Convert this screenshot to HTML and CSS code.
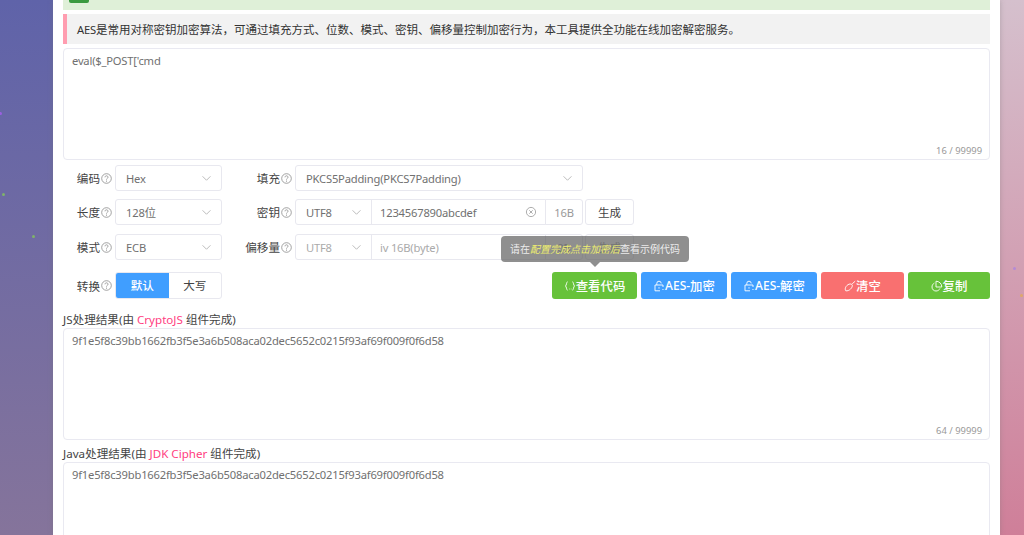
FILE: index.html
```html
<!DOCTYPE html>
<html lang="zh-CN">
<head>
<meta charset="utf-8">
<title>AES</title>
<link rel="stylesheet" href="styles.css">
</head>
<body>
<span class="dot dot-a"></span><span class="dot dot-b"></span><span class="dot dot-c"></span><span class="dot dot-d"></span><span class="dot dot-e"></span>
<main class="sheet">
  <div class="notice"><span class="notice-btn"></span></div>
  <div class="quote"><span class="lat">AES</span>是常用对称密钥加密算法，可通过填充方式、位数、模式、密钥、偏移量控制加密行为，本工具提供全功能在线加密解密服务。</div>
  <div class="area"><div class="area-text lat">eval($_POST['cmd</div><span class="count">16 / 99999</span></div>

  <div class="row r1">
    <div class="lab lab1">编码<svg class="q"><use href="#i-q"/></svg></div>
    <div class="ctl sel w107"><span class="lat">Hex</span><svg class="chev"><use href="#i-c"/></svg></div>
    <div class="lab lab2">填充<svg class="q"><use href="#i-q"/></svg></div>
    <div class="ctl sel w288"><span class="lat">PKCS5Padding(PKCS7Padding)</span><svg class="chev"><use href="#i-c"/></svg></div>
  </div>
  <div class="row r2">
    <div class="lab lab1">长度<svg class="q"><use href="#i-q"/></svg></div>
    <div class="ctl sel w107"><span><span class="lat">128</span>位</span><svg class="chev"><use href="#i-c"/></svg></div>
    <div class="lab lab2">密钥<svg class="q"><use href="#i-q"/></svg></div>
    <div class="group">
      <div class="ctl sel w77"><span class="lat">UTF8</span><svg class="chev"><use href="#i-c"/></svg></div>
      <div class="ctl inp w175"><span class="lat">1234567890abcdef</span><svg class="clear" viewBox="0 0 12 12"><circle cx="6" cy="6" r="4.6"/><path d="M4.300 4.300l3.400 3.400M7.700 4.300l-3.400 3.400"/></svg></div>
      <div class="ctl addon lat">16B</div>
    </div>
    <div class="ctl gen">生成</div>
  </div>
  <div class="row r3">
    <div class="lab lab1">模式<svg class="q"><use href="#i-q"/></svg></div>
    <div class="ctl sel w107"><span class="lat">ECB</span><svg class="chev"><use href="#i-c"/></svg></div>
    <div class="lab lab2">偏移量<svg class="q"><use href="#i-q"/></svg></div>
    <div class="group off">
      <div class="ctl sel w77"><span class="lat">UTF8</span><svg class="chev"><use href="#i-c"/></svg></div>
      <div class="ctl inp w175"><span class="lat">iv 16B(byte)</span></div>
      <div class="ctl addon lat">0B</div>
    </div>
    <div class="ctl gen off">生成</div>
  </div>
  <div class="row r4">
    <div class="lab lab1">转换<svg class="q"><use href="#i-q"/></svg></div>
    <div class="toggle"><span class="on">默认</span><span>大写</span></div>
    <div class="actions">
      <div class="tip">请在<em>配置完成点击加密后</em>查看示例代码</div>
      <button class="btn green w85"><svg viewBox="0 0 12 12"><path d="M3.600 1.800C2.200 1.800 2.800 5.400 1.400 6c1.400.6.8 4.200 2.200 4.200M8.400 1.800c1.400 0 .8 3.600 2.200 4.200-1.400.6-.8 4.200-2.200 4.200M5 9h.6M6.800 9h.6"/></svg>查看代码</button>
      <button class="btn blue w86"><svg viewBox="0 0 12 12"><use href="#i-l"/></svg><span class="lat">AES-</span>加密</button>
      <button class="btn blue w86"><svg viewBox="0 0 12 12"><use href="#i-l"/></svg><span class="lat">AES-</span>解密</button>
      <button class="btn red w83"><svg viewBox="0 0 12 12"><path d="M11.200 1.200L8.200 3.800M1.800 10.800c-1.400-1.800 0-5.400 3.200-6.600 1.400-.5 3-.2 3.300 1C8.700 7.800 5 11.400 1.800 10.800z"/></svg>清空</button>
      <button class="btn green w82"><svg viewBox="0 0 12 12"><path d="M3.400 3C1.900 3.900 1 5.300 1 7c0 2.400 1.800 4 4 4 1.800 0 3.300-1 3.900-2.500M5 1.200V7h5.800C10.800 3.800 8.200 1.200 5 1.200z"/></svg>复制</button>
    </div>
  </div>

  <div class="cap"><span class="lat">JS</span>处理结果(由 <b class="lat">CryptoJS</b> 组件完成)</div>
  <div class="area"><div class="area-text lat">9f1e5f8c39bb1662fb3f5e3a6b508aca02dec5652c0215f93af69f009f0f6d58</div><span class="count">64 / 99999</span></div>
  <div class="cap cap2"><span class="lat">Java</span>处理结果(由 <b class="lat">JDK Cipher</b> 组件完成)</div>
  <div class="area"><div class="area-text lat">9f1e5f8c39bb1662fb3f5e3a6b508aca02dec5652c0215f93af69f009f0f6d58</div></div>
</main>
<svg class="defs" width="0" height="0">
  <symbol id="i-q" viewBox="0 0 11 11"><circle cx="5.500" cy="5.500" r="4.800" fill="none" stroke="currentColor" stroke-width=".8"/><path d="M4 4.300c0-2 3-2 3 0 0 1.100-1.500 1-1.500 2.300" fill="none" stroke="currentColor" stroke-width=".8"/><circle cx="5.500" cy="8.100" r=".55" fill="currentColor"/></symbol>
  <symbol id="i-c" viewBox="0 0 12 8"><path d="M1.500 1.500L6 6l4.500-4.500" fill="none" stroke="currentColor" stroke-width=".9"/></symbol>
  <symbol id="i-l" viewBox="0 0 12 12"><path d="M3.800 5V3.400a2.200 2.200 0 0 1 4.400 0M10 7V5H2v5.800h5M6 7.200v1.400M9 9.500h.6M10.500 9.500h.6"/></symbol>
</svg>
</body>
</html>
```
FILE: styles.css
```css
* { box-sizing: border-box; }
html, body { margin: 0; height: 535px; overflow: hidden; }
body {
  position: relative;
  background: linear-gradient(#5f63a9, #85749b) left / 53px 100% no-repeat, linear-gradient(#d5c0cd, #cf7f99) right / 24px 100% no-repeat, #999;
  font-family: "Noto Sans", "Noto Sans CJK SC", sans-serif;
  font-size: 11.6px;
  color: #5f5f5f;
}
.lat { font-size: 11.2px; letter-spacing: -.2px; }
.dot { position: absolute; width: 3px; height: 3px; border-radius: 50%; }
.dot-a { left: 2px; top: 193px; background: #7fb36a; }
.dot-b { left: 32px; top: 235px; background: #7fb36a; }
.dot-c { left: -1px; top: 112px; background: #9a5fe0; }
.dot-d { left: 1013px; top: 267px; background: #b48ad6; }
.dot-e { left: 1020px; top: 294px; background: #e0a86a; }
.sheet {
  width: 947px;
  height: 535px;
  margin-left: 53px;
  padding: 0 10px;
  background: #fff;
  box-shadow: 0 0 5px rgba(120, 120, 120, .4);
  overflow: hidden;
}
.notice { height: 10px; background: #dff0d8; padding-left: 6px; }
.notice-btn { display: block; width: 20px; height: 3px; background: #3a9a3f; border-radius: 0 0 2px 2px; }
.quote {
  height: 30px;
  margin-top: 4px;
  padding-left: 10px;
  border-left: 4px solid #ff9db0;
  background: #f2f2f2;
  color: #333;
  font-size: 11.5px;
  line-height: 31px;
  white-space: nowrap;
}
.area {
  position: relative;
  height: 112px;
  margin-top: 4px;
  padding: 3px 8px;
  border: 1px solid #e9e9f1;
  border-radius: 4px;
  background: #fff;
  color: #707070;
  line-height: 18px;
}
.count { position: absolute; right: 7px; bottom: 1px; font-size: 9.4px; line-height: 14px; color: #999; }
.row { display: flex; align-items: center; height: 26px; margin-top: 8px; }
.r1 { margin-top: 5px; }
.r3 { margin-top: 9px; }
.r4 { height: 27px; margin-top: 12px; }
.lab { display: flex; align-items: center; justify-content: flex-end; height: 26px; color: #444; padding-right: 3px; }
.lab1 { width: 52px; }
.lab2 { width: 73px; }
.q { width: 11px; height: 11px; margin-left: 1px; color: #8a8a8a; }
.ctl {
  display: flex;
  align-items: center;
  height: 26px;
  border: 1px solid #e8e8ef;
  border-radius: 3px;
  background: #fff;
  color: #707070;
  white-space: nowrap;
}
.sel { justify-content: space-between; padding: 0 9px 0 10px; }
.chev { width: 11px; height: 7px; color: #aaa; }
.w107 { width: 107px; }
.w288 { width: 288px; }
.w77 { width: 77px; border-radius: 3px 0 0 3px; }
.w175 { width: 175px; padding: 0 8px; justify-content: space-between; margin-left: -1px; border-radius: 0; }
.clear { width: 12px; height: 12px; fill: none; stroke: #999; stroke-width: .8; }
.group { display: flex; }
.addon { width: 38px; margin-left: -1px; justify-content: center; border-radius: 0 3px 3px 0; color: #999; }
.gen { width: 49px; margin-left: 2px; justify-content: center; color: #444; }
.off .ctl, .off.ctl { color: #aaa; }
.toggle {
  display: flex;
  width: 107px;
  height: 27px;
  border: 1px solid #e8e8ef;
  border-radius: 3px;
  line-height: 25px;
  text-align: center;
  color: #444;
  overflow: hidden;
}
.toggle span { flex: 1; }
.toggle .on { background: #409eff; color: #fff; font-weight: 500; }
.actions { position: relative; display: flex; gap: 4px; margin-left: auto; }
.btn {
  display: flex;
  align-items: center;
  justify-content: center;
  height: 27px;
  padding: 0;
  border: 0;
  border-radius: 3px;
  color: #fff;
  font: 500 12.4px "Noto Sans", "Noto Sans CJK SC", sans-serif;
}
.btn svg { width: 12px; height: 12px; fill: none; stroke: #fff; stroke-width: .9; }
.btn .lat { font-size: 12px; letter-spacing: 0; }
.green { background: #67c23a; }
.blue { background: #409eff; }
.red { background: #f97070; }
.w85 { width: 85px; }
.w86 { width: 86px; }
.w83 { width: 83px; }
.w82 { width: 82px; }
.tip {
  position: absolute;
  left: -51px;
  top: -36px;
  width: 188px;
  height: 26px;
  border-radius: 4px;
  background: rgba(90, 90, 90, .68);
  color: rgba(255, 255, 255, .85);
  font-size: 10px;
  line-height: 26px;
  text-align: center;
  white-space: nowrap;
}
.tip em { color: #eded70; }
.tip::after {
  content: "";
  position: absolute;
  left: 89px;
  top: 26px;
  border: 5px solid transparent;
  border-top-color: rgba(90, 90, 90, .68);
  border-bottom: 0;
}
.cap { height: 17px; margin-top: 12px; color: #444; line-height: 17px; white-space: nowrap; }
.cap .lat { font-size: 11.6px; letter-spacing: 0; }
.cap b { font-weight: 400; color: #ff3d7f; }
.cap2 { margin-top: 5px; }
.cap + .area { margin-top: 0; }
.defs { position: absolute; }
```
